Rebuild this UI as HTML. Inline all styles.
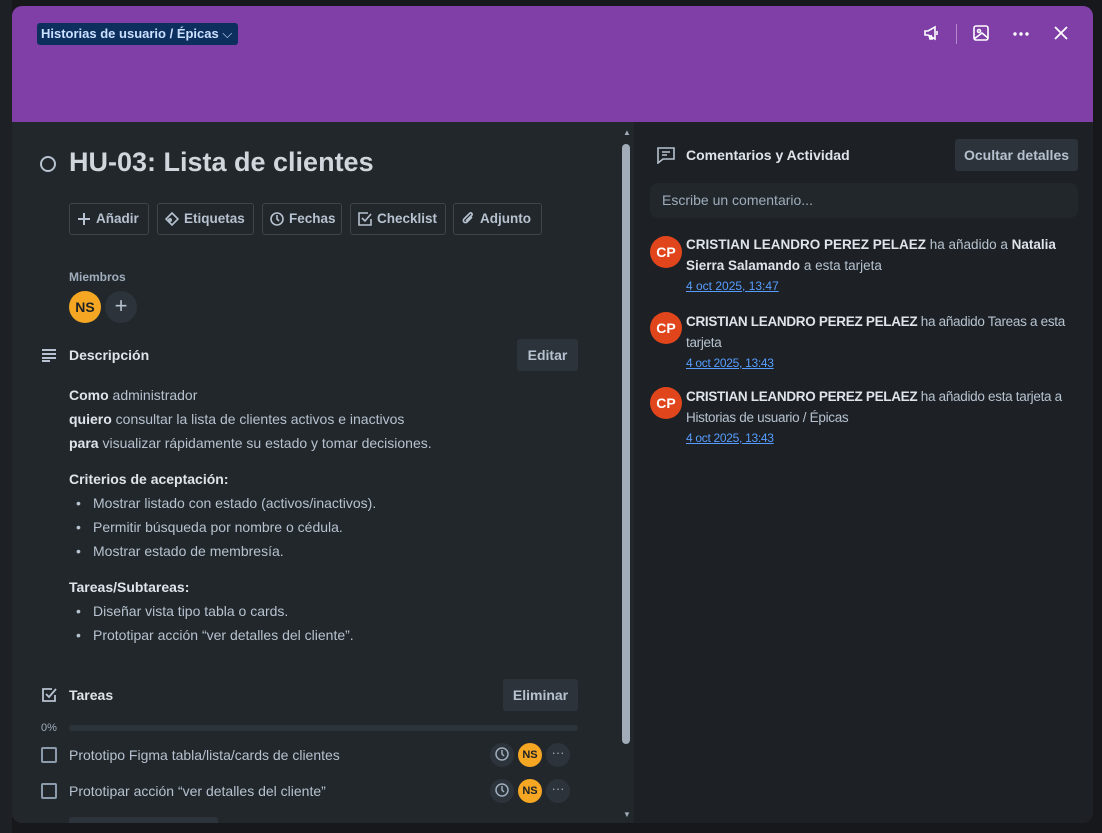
<!DOCTYPE html>
<html><head><meta charset="utf-8"><style>
*{box-sizing:border-box;margin:0;padding:0}
body{width:1102px;height:833px;background:#16181b;font-family:"Liberation Sans",sans-serif;color:#b6c2cf;overflow:hidden;position:relative;font-size:14px}
.bgl{position:absolute;left:0;top:0;width:12px;height:833px;background:#1d2125}
.modal{position:absolute;left:12px;top:6px;width:1081px;height:817px;border-radius:10px;overflow:hidden;background:#22272b}
.hdr{position:absolute;left:0;top:0;width:1081px;height:116px;background:#7f3fa7}
.crumb{position:absolute;left:25px;top:17px;height:22px;background:#0c2f5e;border-radius:3px;color:#cce0ff;font-weight:bold;font-size:13px;line-height:22px;padding:0 6px 0 4px;white-space:nowrap}
.ic{position:absolute;top:18px;color:#fff}
.left{position:absolute;left:0;top:116px;width:622px;height:701px;background:#22272b}
.right{position:absolute;left:622px;top:116px;width:459px;height:701px;background:#1d2125}
.sb{position:absolute;left:606px;top:116px;width:16px;height:701px;background:#22272b}
.thumb{position:absolute;left:610px;top:138px;width:8px;height:600px;background:#a1acb8;border-radius:4px}
.t{position:absolute;white-space:nowrap}
.btn{position:absolute;top:203px;height:32px;border:1px solid #3d444b;border-radius:3px;color:#b6c2cf;font-weight:bold;font-size:13.5px;line-height:30px;padding:0 7px;display:flex;align-items:center;gap:5px;white-space:nowrap}
.btn svg{flex:none}
.gbtn{position:absolute;background:#2c333a;border-radius:3px;color:#b6c2cf;font-weight:bold;font-size:14px;text-align:center;white-space:nowrap}
.av{position:absolute;border-radius:50%;color:#1d2125;font-weight:bold;text-align:center;background:#f5a623}
.cp{position:absolute;left:650px;width:32px;height:32px;border-radius:50%;background:#e0451b;color:#fff;font-weight:bold;font-size:14px;line-height:32px;text-align:center}
.act{position:absolute;left:686px;width:400px;font-size:13.5px;line-height:21px;color:#b6c2cf}
.act b{color:#dee4ea}
.act a{display:block;color:#579dff;font-size:12px;text-decoration:underline;line-height:20px}
.desc{position:absolute;left:69px;font-size:14px;color:#b6c2cf;white-space:nowrap}
.desc b{color:#dee4ea}
.li{position:absolute;left:93px;font-size:14px;white-space:nowrap}
.li:before{content:"•";position:absolute;left:-17px}
.cb{position:absolute;left:41px;width:16px;height:16px;border:2px solid #8c9bab;border-radius:2px}
.rc{position:absolute;width:24px;height:24px;border-radius:50%;background:#2c333a;color:#9fadbc;text-align:center;line-height:22px;font-size:13px}
</style></head><body>
<div class="bgl"></div>
<div class="modal">
<div class="hdr">
 <div class="crumb">Historias de usuario / Épicas <span style="font-weight:normal">⌵</span></div>
 <svg class="ic" style="left:911px" width="18" height="18" viewBox="0 0 18 18" fill="none" stroke="#fff" stroke-width="1.6"><path d="M2 7v4h3l7 4V3L5 7z M6 11l1 4h2l-1-4 M14 7v4"/></svg>
 <div style="position:absolute;left:944px;top:18px;width:1px;height:20px;background:#b38bcc"></div>
 <svg class="ic" style="left:960px" width="18" height="18" viewBox="0 0 18 18" fill="none" stroke="#fff" stroke-width="1.6"><rect x="2" y="2" width="14" height="14" rx="2"/><circle cx="7" cy="7" r="1.5"/><path d="M2 15l8-6 6 5"/></svg>
 <svg class="ic" style="left:1000px;top:25px" width="18" height="6" viewBox="0 0 18 6" fill="#fff"><circle cx="3" cy="3" r="1.7"/><circle cx="9" cy="3" r="1.7"/><circle cx="15" cy="3" r="1.7"/></svg>
 <svg class="ic" style="left:1042px;top:20px" width="14" height="14" viewBox="0 0 14 14" stroke="#fff" stroke-width="1.8"><path d="M1 1l12 12M13 1L1 13"/></svg>
</div>
<div class="left"></div>
<div class="right"></div>
<div class="sb"></div><div class="thumb"></div>
<div style="position:absolute;left:611px;top:122px;font-size:8px;color:#a1acb8">▲</div>
<div style="position:absolute;left:611px;top:804px;font-size:8px;color:#a1acb8">▼</div>
</div>

<div style="position:absolute;left:40px;top:156px;width:16px;height:16px;border:2px solid #b6c2cf;border-radius:50%"></div>
<div class="t" style="left:69px;top:147px;font-size:27px;font-weight:bold;color:#d0d6dc">HU-03: Lista de clientes</div>

<div class="btn" style="left:69px;width:80px"><svg width="14" height="14" viewBox="0 0 14 14" stroke="#b6c2cf" stroke-width="2"><path d="M7 1v12M1 7h12"/></svg>Añadir</div>
<div class="btn" style="left:157px;width:97px"><svg width="14" height="14" viewBox="0 0 14 14" fill="none" stroke="#b6c2cf" stroke-width="1.6"><path d="M7 1l6 6-6 6-6-6z"/><circle cx="5" cy="8" r="1.2"/></svg>Etiquetas</div>
<div class="btn" style="left:262px;width:80px"><svg width="14" height="14" viewBox="0 0 14 14" fill="none" stroke="#b6c2cf" stroke-width="1.6"><circle cx="7" cy="7" r="6"/><path d="M7 3v4l2 2"/></svg>Fechas</div>
<div class="btn" style="left:350px;width:96px"><svg width="14" height="14" viewBox="0 0 14 14" fill="none" stroke="#b6c2cf" stroke-width="1.6"><path d="M13 7v6H1V1h9"/><path d="M4 6l3 3 6-7"/></svg>Checklist</div>
<div class="btn" style="left:453px;width:89px"><svg width="14" height="14" viewBox="0 0 14 14" fill="none" stroke="#b6c2cf" stroke-width="1.6"><path d="M11 5L6 10a2 2 0 01-3-3l6-6a1.5 1.5 0 012 2L5 9"/></svg>Adjunto</div>

<div class="t" style="left:69px;top:270px;font-size:12px;font-weight:bold;color:#9fadbc">Miembros</div>
<div class="av" style="left:69px;top:291px;width:32px;height:32px;line-height:32px;font-size:14px">NS</div>
<div style="position:absolute;left:105px;top:291px;width:32px;height:32px;border-radius:50%;background:#2c333a;color:#b6c2cf;text-align:center;line-height:30px;font-size:22px">+</div>

<svg style="position:absolute;left:41px;top:348px" width="16" height="14" viewBox="0 0 16 14" stroke="#b6c2cf" stroke-width="2"><path d="M1 2h14M1 6h14M1 10h14M1 13h8"/></svg>
<div class="t" style="left:69px;top:347px;font-size:14px;font-weight:bold;color:#dee4ea">Descripción</div>
<div class="gbtn" style="left:517px;top:339px;width:61px;height:32px;line-height:32px">Editar</div>

<div class="desc" style="top:387px"><b>Como</b> administrador</div>
<div class="desc" style="top:411px"><b>quiero</b> consultar la lista de clientes activos e inactivos</div>
<div class="desc" style="top:435px"><b>para</b> visualizar rápidamente su estado y tomar decisiones.</div>
<div class="desc" style="top:471px"><b>Criterios de aceptación:</b></div>
<div class="li" style="top:495px">Mostrar listado con estado (activos/inactivos).</div>
<div class="li" style="top:519px">Permitir búsqueda por nombre o cédula.</div>
<div class="li" style="top:543px">Mostrar estado de membresía.</div>
<div class="desc" style="top:579px"><b>Tareas/Subtareas:</b></div>
<div class="li" style="top:603px">Diseñar vista tipo tabla o cards.</div>
<div class="li" style="top:627px">Prototipar acción “ver detalles del cliente”.</div>

<svg style="position:absolute;left:41px;top:687px" width="16" height="16" viewBox="0 0 16 16" fill="none" stroke="#b6c2cf" stroke-width="1.8"><path d="M14 8v6H2V2h9"/><path d="M5 7l3 3 7-8"/></svg>
<div class="t" style="left:69px;top:687px;font-weight:bold;color:#dee4ea">Tareas</div>
<div class="gbtn" style="left:503px;top:679px;width:75px;height:32px;line-height:32px">Eliminar</div>
<div class="t" style="left:41px;top:722px;font-size:11px;color:#9fadbc">0%</div>
<div style="position:absolute;left:69px;top:725px;width:509px;height:6px;border-radius:3px;background:#2c333a"></div>

<div class="cb" style="top:747px"></div>
<div class="t" style="left:69px;top:747px">Prototipo Figma tabla/lista/cards de clientes</div>
<div class="rc" style="left:490px;top:743px"><svg width="14" height="14" viewBox="0 0 14 14" fill="none" stroke="#9fadbc" stroke-width="1.5" style="margin-top:4px"><circle cx="7" cy="7" r="6"/><path d="M7 3v4l2 2"/></svg></div>
<div class="av" style="left:518px;top:743px;width:24px;height:24px;line-height:24px;font-size:11px">NS</div>
<div class="rc" style="left:546px;top:743px;line-height:20px">···</div>
<div class="cb" style="top:783px"></div>
<div class="t" style="left:69px;top:783px">Prototipar acción “ver detalles del cliente”</div>
<div class="rc" style="left:490px;top:779px"><svg width="14" height="14" viewBox="0 0 14 14" fill="none" stroke="#9fadbc" stroke-width="1.5" style="margin-top:4px"><circle cx="7" cy="7" r="6"/><path d="M7 3v4l2 2"/></svg></div>
<div class="av" style="left:518px;top:779px;width:24px;height:24px;line-height:24px;font-size:11px">NS</div>
<div class="rc" style="left:546px;top:779px;line-height:20px">···</div>
<div style="position:absolute;left:69px;top:817px;width:149px;height:6px;background:#2c333a;border-radius:3px 3px 0 0"></div>

<svg style="position:absolute;left:657px;top:147px" width="18" height="17" viewBox="0 0 18 17" fill="none" stroke="#b6c2cf" stroke-width="1.6"><path d="M1 1h16v11H6l-5 4z M5 5h8M5 8h5"/></svg>
<div class="t" style="left:686px;top:147px;font-weight:bold;color:#dee4ea">Comentarios y Actividad</div>
<div class="gbtn" style="left:955px;top:139px;width:123px;height:32px;line-height:32px">Ocultar detalles</div>
<div style="position:absolute;left:650px;top:183px;width:428px;height:35px;border-radius:8px;background:#22272b;color:#9fadbc;padding:0 12px;line-height:35px">Escribe un comentario...</div>

<div class="cp" style="top:236px">CP</div>
<div class="act" style="top:234px"><b>CRISTIAN LEANDRO PEREZ PELAEZ</b> ha añadido a <b>Natalia Sierra Salamando</b> a esta tarjeta<a>4 oct 2025, 13:47</a></div>
<div class="cp" style="top:312px">CP</div>
<div class="act" style="top:311px;letter-spacing:-0.3px"><b>CRISTIAN LEANDRO PEREZ PELAEZ</b> ha añadido Tareas a esta tarjeta<a>4 oct 2025, 13:43</a></div>
<div class="cp" style="top:387px">CP</div>
<div class="act" style="top:386px;letter-spacing:-0.3px"><b>CRISTIAN LEANDRO PEREZ PELAEZ</b> ha añadido esta tarjeta a Historias de usuario / Épicas<a>4 oct 2025, 13:43</a></div>
</body></html>
